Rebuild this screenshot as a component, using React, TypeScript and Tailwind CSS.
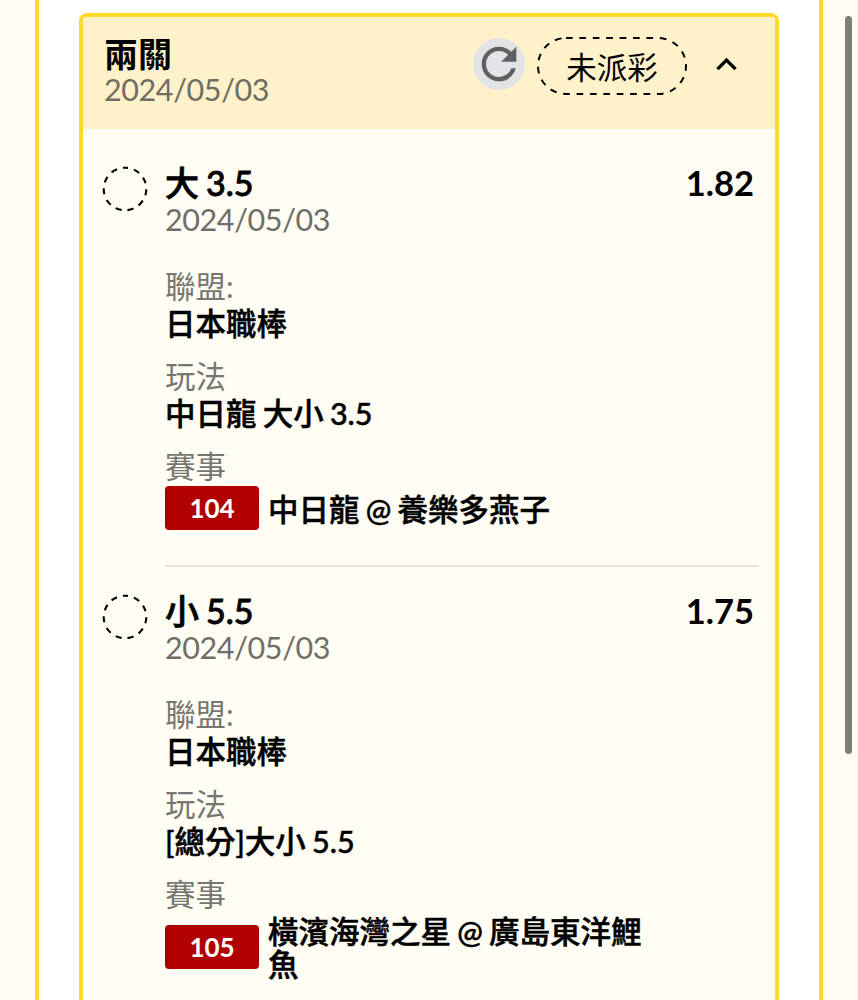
import React from 'react';
import { MdExpandLess, MdRefresh } from 'react-icons/md';

interface Match {
  id: string;
  teams: string;
}

interface Leg {
  pick: string;
  date: string;
  odds: string;
  league: string;
  play: string;
  match: Match;
}

const legs: Leg[] = [
  {
    pick: '大 3.5',
    date: '2024/05/03',
    odds: '1.82',
    league: '日本職棒',
    play: '中日龍 大小 3.5',
    match: { id: '104', teams: '中日龍 @ 養樂多燕子' },
  },
  {
    pick: '小 5.5',
    date: '2024/05/03',
    odds: '1.75',
    league: '日本職棒',
    play: '[總分]大小 5.5',
    match: { id: '105', teams: '橫濱海灣之星 @ 廣島東洋鯉魚' },
  },
];

const Label: React.FC<{ children: React.ReactNode }> = ({ children }) => (
  <div className="h-[37px] leading-[37px] text-[#777671]">{children}</div>
);

const Value: React.FC<{ children: React.ReactNode }> = ({ children }) => (
  <div className="mb-4 h-[37px] leading-[37px] font-medium [-webkit-text-stroke:0.5px]">{children}</div>
);

// Dashed ring shown while a leg has no result yet
const PendingRing: React.FC = () => (
  <svg className="mt-[2px] size-[46px] shrink-0" viewBox="0 0 46 46" fill="none">
    <circle cx="23" cy="23" r="21.3" stroke="#000" strokeWidth="2.1" strokeDasharray="6.2 5.97" strokeDashoffset="3.1" transform="rotate(-90 23 23)" />
  </svg>
);

const LegRow: React.FC<{ leg: Leg; last: boolean }> = ({ leg, last }) => (
  <div className="flex gap-[17px]">
    <PendingRing />
    <div className={last ? 'w-[594px] shrink-0' : 'mb-[25px] w-[594px] shrink-0 border-b-2 border-[#e6e3dc] pb-[35px]'}>
      <div className="flex h-[37px] items-center justify-between pr-[5px] text-[34px] leading-[37px]">
        <span className="font-medium [-webkit-text-stroke:0.8px]">{leg.pick}</span>
        <span className="text-[34.5px] font-bold">{leg.odds}</span>
      </div>
      <div className="mb-[30px] h-[37px] leading-[37px] tracking-[-0.4px] text-[#6f6e69]">{leg.date}</div>

      <Label>聯盟:</Label>
      <Value>{leg.league}</Value>
      <Label>玩法</Label>
      <Value>{leg.play}</Value>
      <Label>賽事</Label>
      <div className="mt-px flex items-center gap-[9px]">
        <span className="flex h-[44px] w-[94px] shrink-0 items-center justify-center rounded bg-[#b10000] text-[26px] font-bold text-white">
          {leg.match.id}
        </span>
        <span className="w-[385px] translate-y-px leading-[33px] font-medium [-webkit-text-stroke:0.5px]">{leg.match.teams}</span>
      </div>
    </div>
  </div>
);

export default function App() {
  return (
    <div className="flex h-[1000px] w-[858px] overflow-hidden bg-[#fffcf4] pl-[35px] font-['Lato','Noto_Sans_CJK_TC',sans-serif] text-[30.5px] [word-spacing:-1.5px] text-black">
      <div className="h-[1010px] w-[788px] shrink-0 border-x-[4.5px] border-[#ffd829] bg-white px-10 pt-[13px]">
        <div className="h-[1010px] w-[700px] overflow-hidden rounded-t-lg border-[4.5px] border-[#ffd829] bg-[#fffdf4]">
          <div className="flex h-[112px] items-start justify-between bg-[#fff2cb] pt-[18px] pr-[28px] pl-[21px]">
            <div>
              <div className="h-[36px] text-[34px] leading-[37px] font-bold">兩關</div>
              <div className="h-[37px] leading-[37px] tracking-[-0.4px] text-[#6f6e60]">2024/05/03</div>
            </div>
            <div className="flex items-center pt-[2px]">
              <button type="button" className="mr-[12px] mb-1 flex size-[52px] items-center justify-center rounded-full bg-[#e2e3e6] text-[#5f6062]">
                <MdRefresh size={52} />
              </button>
              <div className="relative mr-[19px] flex h-[58px] w-[150px] items-center justify-center">
                <svg className="absolute inset-0" width="150" height="58" viewBox="0 0 150 58" fill="none">
                  <rect x="1" y="1" width="148" height="56" rx="28" stroke="#000" strokeWidth="2" strokeDasharray="6.7 6.7" />
                </svg>
                <span className="pt-[2px] leading-[37px]">未派彩</span>
              </div>
              <button type="button" className="mb-[3px]">
                <MdExpandLess size={41} />
              </button>
            </div>
          </div>

          <div className="pt-[35px] pl-[19px]">
            {legs.map((leg, idx) => (
              <LegRow key={leg.match.id} leg={leg} last={idx === legs.length - 1} />
            ))}
          </div>
        </div>
      </div>
      <div className="mt-4 ml-[22px] h-[738px] w-[7px] shrink-0 rounded-full bg-[#80807b]" />
    </div>
  );
}
